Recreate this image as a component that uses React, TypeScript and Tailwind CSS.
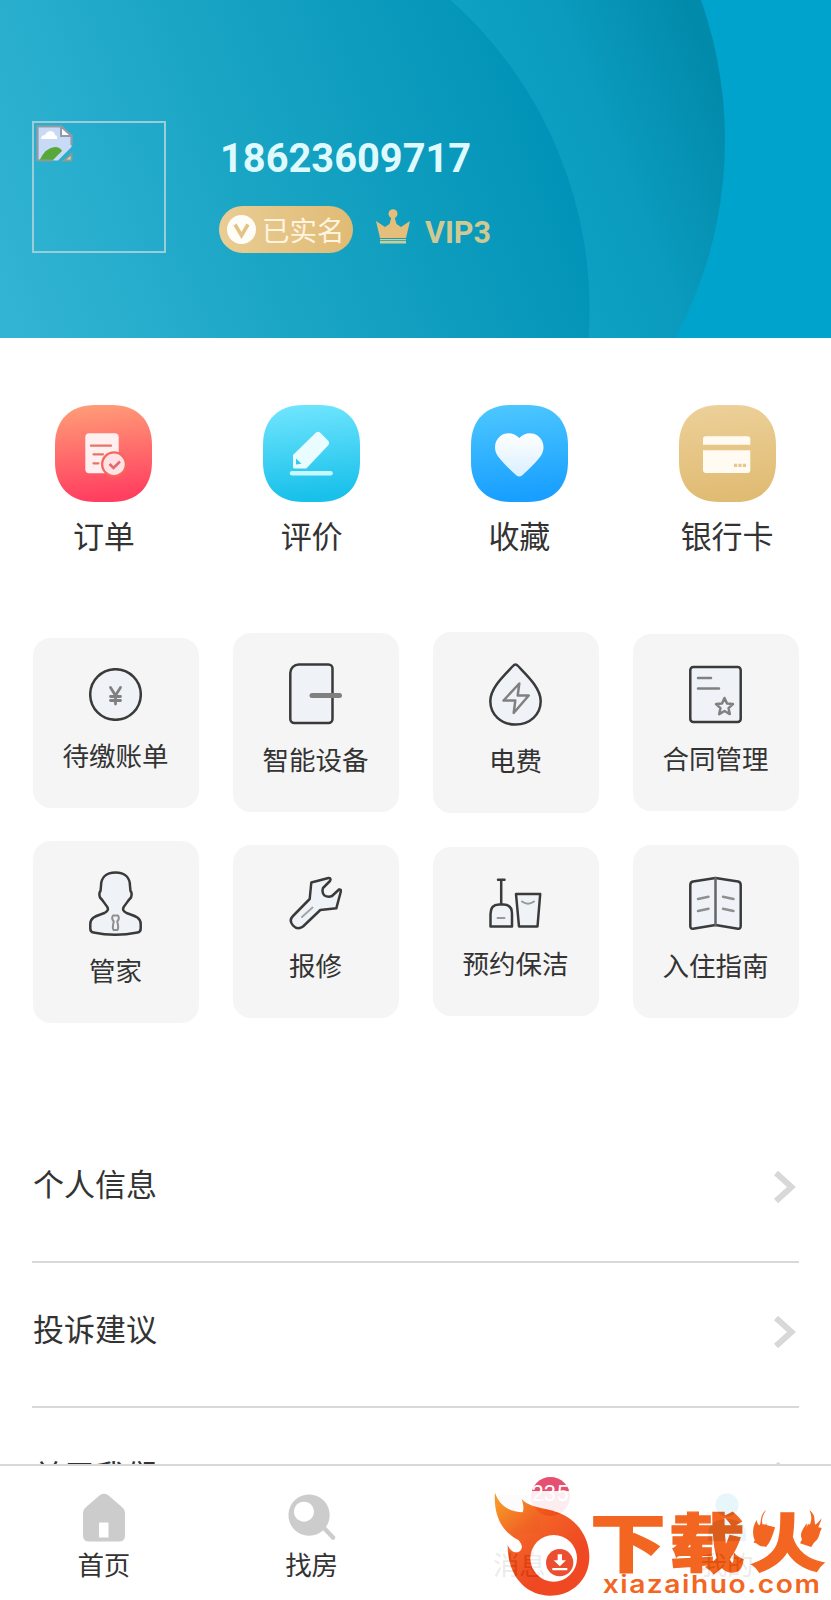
import type { ReactNode } from "react";

const shortcuts = [
  { label: "订单", from: "#ff9f78", to: "#ff3f60", icon: <OrderGlyph /> },
  { label: "评价", from: "#72e6ff", to: "#18c0ea", icon: <ReviewGlyph /> },
  { label: "收藏", from: "#4ec8ff", to: "#189fff", icon: <HeartGlyph /> },
  { label: "银行卡", from: "#edd19a", to: "#e0bb73", icon: <CardGlyph /> },
];

// every service icon is 53px wide, the height follows the drawing
const services: { label: string; height: number; icon: ReactNode }[][] = [
  [
    {
      label: "待缴账单",
      height: 53,
      icon: (
        <>
          <circle cx="26.5" cy="26.5" r="25.3" />
          <path d="M21.5 19.5l5 8 5-8M26.5 27.5V36M21.5 28.5h10M21.5 32.5h10" fill="none" stroke="#808080" strokeWidth="2.8" />
        </>
      ),
    },
    {
      label: "智能设备",
      height: 62,
      icon: (
        <>
          <path d="M10 1.500H39.500a4 4 0 0 1 4 4V56a4 4 0 0 1-4 4H5.300a4 4 0 0 1-4-4V10a8.500 8.500 0 0 1 8.700-8.500z" />
          <path d="M23 32.500H50.500" stroke="#808080" strokeWidth="5" />
        </>
      ),
    },
    {
      label: "电费",
      height: 64,
      icon: (
        <>
          <path d="M24 4Q26.500 1 29 4C38 13.500 51.700 26 51.700 39C51.700 52.500 41 62.500 26.500 62.500S1.300 52.500 1.300 39C1.300 26 15 13.500 24 4z" />
          <path d="M30.300 21.500L14.500 38.500H26.300L24.700 51L39.700 33.500H28.700z" fill="none" stroke="#808080" />
        </>
      ),
    },
    {
      label: "合同管理",
      height: 60,
      icon: (
        <>
          <rect x="1.300" y="3" width="50.400" height="55" rx="3" />
          <path d="M9 14h13M9 24.500h21" stroke="#808080" />
          <path d="M35.500 34l2.500 5.500 6 .6-4.500 4 1.300 6-5.300-3.100-5.300 3.100 1.300-6-4.500-4 6-.6z" fill="none" stroke="#808080" />
        </>
      ),
    },
  ],
  [
    {
      label: "管家",
      height: 65,
      icon: (
        <>
          <path d="M26.500 1.500C17 1.500 12 7 12 15L11.500 20Q9.500 22 11 26.500C14 29.500 15.500 32.500 18 35.500C20 38.500 18.500 40.500 15.500 42C9 44.500 1.300 45.500 1.300 53V57.500Q1.300 61 4.500 61.500Q26 66 48.500 61.500Q51.700 61 51.700 57.500V53C51.700 45.500 44 44.500 37.500 42C34.500 40.500 33 38.500 35 35.500C37.500 32.500 39 29.500 42 26.500Q43.500 22 41.500 20L41 15C41 7 36 1.500 26.500 1.500z" />
          <path d="M24 44.500h5q2 3-.8 6 1.800 6 .3 8.500h-4q-1.500-2.500.3-8.500-2.800-3-.8-6z" fill="none" stroke="#8f8f8f" strokeWidth="2" />
        </>
      ),
    },
    {
      label: "报修",
      height: 56,
      icon: (
        <>
          <path d="M22.300 7.500L39.500 3Q42.500 3 41 6L34 13Q32.500 18 35.500 20.500Q39 22.500 43 21L50 14.500Q52.500 14 51.700 17L47.300 33.300L31.300 35L14 51.500Q8.500 55.500 4 50.500Q-.5 45.500 4 41L20.700 24z" />
          <path d="M13 42l10.500-9.500" stroke="#a5a5a5" strokeWidth="2" />
        </>
      ),
    },
    {
      label: "预约保洁",
      height: 52,
      icon: (
        <>
          <path d="M9 2.700h6.500M12.200 2.700v24.500" />
          <path d="M1.500 49.500V37Q1.500 27.500 10 27.500h4.500Q23 27.500 23 37V49.500z" />
          <path d="M27 17H51.200L48.500 49.500H30z" />
          <path d="M8.500 41h7M33 24.500q6 4.500 12 0" fill="none" stroke="#999" strokeWidth="2" />
        </>
      ),
    },
    {
      label: "入住指南",
      height: 56,
      icon: (
        <>
          <path d="M26.500 3L4 6.500Q1.300 7 1.300 10V51Q1.300 54 4 53.700L26.500 50L49 53.700Q51.700 54 51.700 51V10Q51.700 7 49 6.500z" />
          <path d="M26.500 3v47" stroke="#666" />
          <path d="M9 24l10.500-2.300M9 36l10.500-2.300M34 21.700L44.500 24M34 33.700L44.500 36" stroke="#8f8f8f" />
        </>
      ),
    },
  ],
];

const links = ["个人信息", "投诉建议", "关于我们"];

export default function App() {
  return (
    <div className="relative flex h-[1600px] w-[831px] flex-col overflow-hidden bg-white font-['Roboto','Noto_Sans_CJK_SC',sans-serif] text-[#333]">
      <ProfileHeader />
      <main className="min-h-0 flex-1 overflow-hidden">
        <div className="grid grid-cols-4 pt-[67px]">
          {shortcuts.map((item, i) => (
            <div key={item.label} className="flex flex-col items-center">
              <svg className="size-[97px]" viewBox="0 0 97 97">
                <defs>
                  <linearGradient id={`shortcut-${i}`} x1="0" y1="0" x2="0.1" y2="1">
                    <stop stopColor={item.from} />
                    <stop offset="1" stopColor={item.to} />
                  </linearGradient>
                </defs>
                <path
                  d="M40 0H57C82 0 97 15 97 40V57C97 82 82 97 57 97H40C15 97 0 82 0 57V40C0 15 15 0 40 0z"
                  fill={`url(#shortcut-${i})`}
                />
                {item.icon}
              </svg>
              <span className="mt-[13px] text-[31px] leading-[46px]">{item.label}</span>
            </div>
          ))}
        </div>

        <div className="mt-[70px] flex flex-col gap-[27px] px-[32.5px]">
          {services.map((row, i) => (
            <div key={i} className="flex h-[182px] items-center justify-between">
              {row.map((item) => (
                <div
                  key={item.label}
                  className="flex w-[166px] flex-col items-center rounded-[18px] bg-[#f5f5f5] pt-[30px] pb-[33px] first:mt-px"
                >
                  <svg
                    width="53"
                    height={item.height}
                    viewBox={`0 0 53 ${item.height}`}
                    fill="#eff3f8"
                    stroke="#3a3a3a"
                    strokeWidth="2.5"
                    strokeLinecap="round"
                    strokeLinejoin="round"
                  >
                    {item.icon}
                  </svg>
                  <span className="mt-[17px] text-[26.500px] leading-[37px]">{item.label}</span>
                </div>
              ))}
            </div>
          ))}
        </div>

        <div className="mt-[95px] px-8">
          {links.map((label) => (
            <div key={label} className="flex h-[145.500px] items-center justify-between border-b-2 border-[#d8d8d8] pb-1">
              <span className="pb-0.5 pl-px text-[31px] leading-[46px]">{label}</span>
              <svg className="mr-0.5 h-[34px] w-[24px]" viewBox="0 0 24 34">
                <path d="M3 3L18.500 17L3 31" fill="none" stroke="#d8d8d8" strokeWidth="6" />
              </svg>
            </div>
          ))}
        </div>
      </main>
      <TabBar />
      <SiteLogo />
    </div>
  );
}

function ProfileHeader() {
  return (
    <header className="relative h-[338px] shrink-0 bg-[#00a3cc]">
      <svg className="absolute inset-0 h-full w-full" viewBox="0 0 831 338">
        <defs>
          <linearGradient id="wave-back" gradientUnits="userSpaceOnUse" x1="500" y1="190" x2="725" y2="100">
            <stop stopColor="#10a3c5" />
            <stop offset="0.500" stopColor="#0a9bbe" />
            <stop offset="1" stopColor="#028aaa" />
          </linearGradient>
          <linearGradient id="wave-front" gradientUnits="userSpaceOnUse" x1="20" y1="330" x2="540" y2="130">
            <stop stopColor="#32b4d4" />
            <stop offset="0.500" stopColor="#19a4c4" />
            <stop offset="1" stopColor="#0294b8" />
          </linearGradient>
        </defs>
        <circle cx="305" cy="140" r="420" fill="url(#wave-back)" />
        <path d="M0 0H450.500A414 414 0 0 1 588.600 338H0z" fill="url(#wave-front)" />
      </svg>
      <div className="relative flex pt-[121px] pl-8">
        <div className="h-[132px] w-[134px] border-2 border-[#98cdd9] p-[3px]">
          <BrokenImage />
        </div>
        <div className="ml-[53px] pt-[14px]">
          <div className="pl-px text-[39.800px] leading-[47px] font-bold text-[#dffaff]">18623609717</div>
          <div className="mt-[24px] flex items-center">
            <div className="flex h-[47px] w-[134px] items-center rounded-full bg-linear-to-r from-[#e9cd94] to-[#e0bb75] pl-2">
              <svg className="size-[29px]" viewBox="0 0 29 29">
                <circle cx="14.500" cy="14.500" r="14.500" fill="#fffdf8" />
                <path d="M8 9.500l6.500 11L21 9.500" fill="none" stroke="#e3c284" strokeWidth="3.500" />
              </svg>
              <span className="ml-1.5 pt-1 text-[27.500px] leading-[40px] text-[#fff4e0]">已实名</span>
            </div>
            <svg className="mb-1.5 ml-[23px] h-[35px] w-[34px]" viewBox="0 0 34 35" fill="#e3bf7b">
              <circle cx="17" cy="4.700" r="4.500" />
              <path d="M15.500 8h3l2 7 4.500 3 9-6-4 17H4L0 12l9 6 4.500-3z" />
              <path d="M4 30h26v1.200H4zM4 32h26v2.500H4z" fill="#cfcb93" />
            </svg>
            <span className="ml-[15px] pt-[6px] text-[30.500px] leading-[36px] font-bold text-[#cfca92]">VIP3</span>
          </div>
        </div>
      </div>
    </header>
  );
}

function BrokenImage() {
  return (
    <svg className="-mt-px -ml-px h-[37px] w-[37px]" viewBox="0 0 37 37">
      <path d="M1.500 1.500H25L35.500 11V22L22 35.500H1.500z" fill="#c8daf6" />
      <path d="M5 14q0-4 4-4 2-4 6-4 4 1 4 4 3 1 2 4z" fill="#fff" />
      <path d="M3 36Q10 22 19 22q5 0 7 4L16 36z" fill="#56a83a" />
      <path d="M1.500 36V1.500H25L35.500 11V20" fill="none" stroke="#959ba5" strokeWidth="2.200" />
      <path d="M25 1.500V11H35.500z" fill="#fff" stroke="#959ba5" strokeWidth="2" />
      <path d="M1.500 35.500H16M28 35.500L35.500 29V35.500z" fill="#c8dacb" stroke="#8a9d93" strokeWidth="1.800" />
    </svg>
  );
}

function OrderGlyph() {
  return (
    <g>
      <rect x="30.300" y="28.300" width="33.400" height="40" rx="4" fill="#fff0ef" />
      <path d="M36 40.700H56M38.500 49.300H48M38.500 58.300H43.500" stroke="#e5746a" strokeWidth="2.300" strokeLinecap="round" />
      <circle cx="59" cy="59.300" r="13" fill="#f4675f" />
      <circle cx="59" cy="59.300" r="10.700" fill="#ffe2e6" />
      <path d="M54.500 59l4 4 6.500-6.500" fill="none" stroke="#e66a6b" strokeWidth="2.600" />
    </g>
  );
}

function ReviewGlyph() {
  return (
    <g>
      <path
        d="M53 27.500Q55 26 57 27.500L65.500 36Q67 38 65.500 40L43.300 63.500H31.500Q30 63.500 30 62V50z"
        fill="#e9fcff"
      />
      <path d="M33 53.500V59.500L38.500 58.700z" fill="#35cbea" />
      <path d="M29 68.300H67.500" stroke="#c6f8ff" strokeWidth="4.500" strokeLinecap="round" />
    </g>
  );
}

function HeartGlyph() {
  return (
    <>
      <defs>
        <linearGradient id="heart" x1="0" y1="0" x2="0" y2="1">
          <stop stopColor="#fff" />
          <stop offset="1" stopColor="#d9efff" />
        </linearGradient>
      </defs>
      <path
        d="M48.200 33C43 27 35 27 30 30.500C23 35.500 22 45 27.500 52C33 59 40 65.500 45.500 70.500Q48.200 72.500 51 70.500C56.500 65.500 63.500 59 69 52C74.500 45 73.500 35.500 66.500 30.500C61.500 27 53.500 27 48.200 33z"
        fill="url(#heart)"
      />
    </>
  );
}

function CardGlyph() {
  return (
    <g fill="#fffaf2">
      <path d="M24 39.700V34Q24 31.300 27 31.300H68.500Q71.300 31.300 71.300 34V39.700z" />
      <path d="M24 45.300H71.300V65Q71.300 68 68.500 68H27Q24 68 24 65z" />
      <path d="M55 58.800h3.200v3.200H55zM59.400 58.800h3.200v3.200h-3.200zM63.800 58.800H67v3.200h-3.200z" fill="#e6c88e" />
    </g>
  );
}

function TabBar() {
  const tabs = [
    {
      label: "首页",
      icon: (
        <path
          fillRule="evenodd"
          d="M20 2Q24 -.5 28 2L43 15Q45 17 45 20V42.500Q45 48.500 39 48.500H9Q3 48.500 3 42.500V20Q3 17 5 15zM20 29.500Q19 29.500 19 30.500V44.500H28.500V30.500Q28.500 29.500 27.500 29.500z"
        />
      ),
    },
    {
      label: "找房",
      icon: (
        <>
          <path fillRule="evenodd" d="M21 1.500a20.600 20.600 0 1 0 .1 0zM16 8.700a10 10 0 1 1-.1 0z" />
          <path d="M35.500 34.500l9.500 10" stroke="#ccc" strokeWidth="4.500" strokeLinecap="round" />
        </>
      ),
    },
    {
      label: "消息",
      icon: <path d="M8 2H40Q45 2 45 7V35Q45 40 40 40H28L18 47V40H8Q3 40 3 35V7Q3 2 8 2z" fill="#e4e8ea" />,
    },
    {
      label: "我的",
      icon: (
        <g fill="#00a3cc">
          <circle cx="24" cy="12" r="11.500" />
          <path d="M5 48V42Q5 26 24 26T43 42V48z" />
        </g>
      ),
    },
  ];
  return (
    <nav className="grid h-[136px] shrink-0 grid-cols-4 border-t-2 border-[#d8d8d8] bg-white pt-[27px]">
      {tabs.map((tab) => (
        <div key={tab.label} className="relative flex flex-col items-center">
          <svg className="h-[49px] w-12" viewBox="0 0 48 49" fill="#ccc">
            {tab.icon}
          </svg>
          <span className="mt-[5px] text-[26.500px] leading-[38px]">{tab.label}</span>
          {tab.label === "消息" && (
            <span className="absolute -top-4 left-[115px] flex size-[39px] items-center justify-center rounded-full bg-[#e64f70] pb-1.5 text-[22px] leading-none text-white">
              235
            </span>
          )}
        </div>
      ))}
    </nav>
  );
}

// translucent site logo laid over the last two tabs
function SiteLogo() {
  return (
    <svg
      className="absolute right-0 bottom-0 h-[109px] w-[339px] bg-white opacity-90"
      viewBox="66 153 1017 327"
    >
      <defs>
        <linearGradient id="flame" gradientUnits="userSpaceOnUse" x1="80" y1="200" x2="240" y2="400">
          <stop stopColor="#f98a12" />
          <stop offset="0.400" stopColor="#f25510" />
          <stop offset="1" stopColor="#ee350c" />
        </linearGradient>
      </defs>
      <path
        d="M75 158C88 198 120 216 158 217C163 205 159 190 155 177C182 206 230 202 270 220C330 245 358 300 358 350C358 420 305 467 240 467C170 467 112 410 113 315C122 335 135 340 147 335C160 328 157 312 145 300C95 275 70 225 75 158z"
        fill="url(#flame)"
      />
      <circle cx="251" cy="355" r="70" fill="#fff" />
      <circle cx="269" cy="368" r="41" fill="#ea3c1a" />
      <path d="M263 343h13v18h12l-18.500 18L251 361h12zM247 384h45v7h-45z" fill="#fff" />
      <g fill="#f2560a">
        <text
          x="361 598 840"
          y="455"
          transform="scale(1 0.83)"
          fontSize="226"
          fontWeight="900"
          stroke="#f2560a"
          strokeWidth="5"
          className="font-['Noto_Sans_CJK_SC',sans-serif]"
        >
          下载火
        </text>
        {/* little flames standing on both sides of the last character */}
        <path d="M889 210C868 225 876 243 869 256C862 252 860 246 861 239C848 256 846 281 854 300C860 314 872 321 882 319C895 312 900 297 895 280C891 267 888 262 890 250C884 254 882 262 881 268C875 250 872 232 889 210z" />
        <path d="M1018 210C1039 225 1031 243 1036 254C1043 250 1048 244 1055 235C1051 252 1044 260 1042 270C1048 268 1050 265 1052 262C1050 285 1044 305 1026 310C1008 314 994 303 993 287C993 272 1003 262 1010 250C1011 259 1010 265 1012 270C1022 252 1030 235 1018 210z" />
        <text
          x="398"
          y="459"
          textLength="656"
          lengthAdjust="spacingAndGlyphs"
          fontSize="73"
          fontWeight="600"
          letterSpacing="4"
          className="font-['Inter',sans-serif]"
        >
          xiazaihuo.com
        </text>
      </g>
    </svg>
  );
}
